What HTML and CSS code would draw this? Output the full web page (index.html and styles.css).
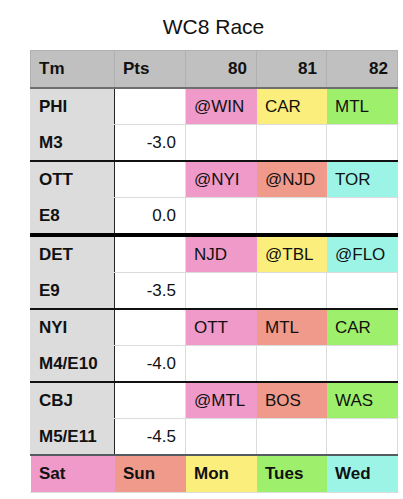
FILE: index.html
```html
<!DOCTYPE html>
<html>
  <head>
    <title>WC8 Race</title>
    <link rel="stylesheet" href="styles.css">
  </head>
  <body>
    <div class="sheet">
      <h1>WC8 Race</h1>
      <table class="race">
        <colgroup>
          <col class="c-team" />
          <col class="c-pts" />
          <col class="c-game" />
          <col class="c-game2" />
          <col class="c-game" />
        </colgroup>
        <thead>
          <tr>
            <th>Tm</th>
            <th>Pts</th>
            <th class="num">80</th>
            <th class="num">81</th>
            <th class="num">82</th>
          </tr>
        </thead>
        <tbody>
          <tr class="group-top first">
            <td class="team">PHI</td>
            <td></td>
            <td class="sat">@WIN</td>
            <td class="mon">CAR</td>
            <td class="tue">MTL</td>
          </tr>
          <tr>
            <td class="team">M3</td>
            <td class="num">-3.0</td>
            <td></td>
            <td></td>
            <td></td>
          </tr>
          <tr class="group-top">
            <td class="team">OTT</td>
            <td></td>
            <td class="sat">@NYI</td>
            <td class="sun">@NJD</td>
            <td class="wed">TOR</td>
          </tr>
          <tr>
            <td class="team">E8</td>
            <td class="num">0.0</td>
            <td></td>
            <td></td>
            <td></td>
          </tr>
          <tr class="cutoff">
            <td class="team">DET</td>
            <td></td>
            <td class="sat">NJD</td>
            <td class="mon">@TBL</td>
            <td class="wed">@FLO</td>
          </tr>
          <tr>
            <td class="team">E9</td>
            <td class="num">-3.5</td>
            <td></td>
            <td></td>
            <td></td>
          </tr>
          <tr class="group-top">
            <td class="team">NYI</td>
            <td></td>
            <td class="sat">OTT</td>
            <td class="sun">MTL</td>
            <td class="tue">CAR</td>
          </tr>
          <tr>
            <td class="team">M4/E10</td>
            <td class="num">-4.0</td>
            <td></td>
            <td></td>
            <td></td>
          </tr>
          <tr class="group-top">
            <td class="team">CBJ</td>
            <td></td>
            <td class="sat">@MTL</td>
            <td class="sun">BOS</td>
            <td class="tue">WAS</td>
          </tr>
          <tr>
            <td class="team">M5/E11</td>
            <td class="num">-4.5</td>
            <td></td>
            <td></td>
            <td></td>
          </tr>
        </tbody>
        <tfoot>
          <tr>
            <td class="sat">Sat</td>
            <td class="sun">Sun</td>
            <td class="mon">Mon</td>
            <td class="tue">Tues</td>
            <td class="wed">Wed</td>
          </tr>
        </tfoot>
      </table>
    </div>
  </body>
</html>
```

FILE: styles.css
```css
body {
  margin: 0;
  background-color: #fff;
  font-family: "Liberation Sans", Arial, sans-serif;
  color: #111;
}

.sheet {
  padding: 0 6px 0 30px;
}

h1 {
  margin: 0;
  height: 50px;
  line-height: 54px;
  text-align: center;
  font-size: 21px;
  font-weight: normal;
}

.race {
  width: 367px;
  border-collapse: collapse;
  table-layout: fixed;
  font-size: 17px;
}

.c-team {
  width: 84px;
}

.c-pts,
.c-game {
  width: 71px;
}

.c-game2 {
  width: 70px;
}

.race th,
.race td {
  height: 35px;
  padding: 0 8px;
  text-align: left;
  border: 1px solid #dcdcdc;
  white-space: nowrap;
}

.race th {
  height: 36px;
  background-color: #c0c0c0;
  border-color: #b0b0b0;
  border-bottom: 2px solid #6e6e6e;
  font-weight: bold;
}

.race .num {
  text-align: right;
  padding-right: 9px;
}

.race td.team {
  background-color: #dcdcdc;
  font-weight: bold;
  border-right: 1px solid #222;
}

.race tbody tr.group-top td {
  border-top: 2px solid #111;
}

.race tbody tr.first td {
  border-top: 2px solid #6e6e6e;
}

.race tbody tr.cutoff td {
  border-top: 4px solid #000;
}

.race tfoot td {
  height: 36px;
  font-weight: bold;
  border-top: 2px solid #555c60;
}

.sat {
  background-color: #ef9ac9;
}

.sun {
  background-color: #ef9a8b;
}

.mon {
  background-color: #fcee7c;
}

.tue {
  background-color: #9ef06c;
}

.wed {
  background-color: #9cf4e6;
}

.race td.sat,
.race td.sun,
.race td.mon,
.race td.tue,
.race td.wed {
  border-left-color: transparent;
  border-right-color: transparent;
}
```
